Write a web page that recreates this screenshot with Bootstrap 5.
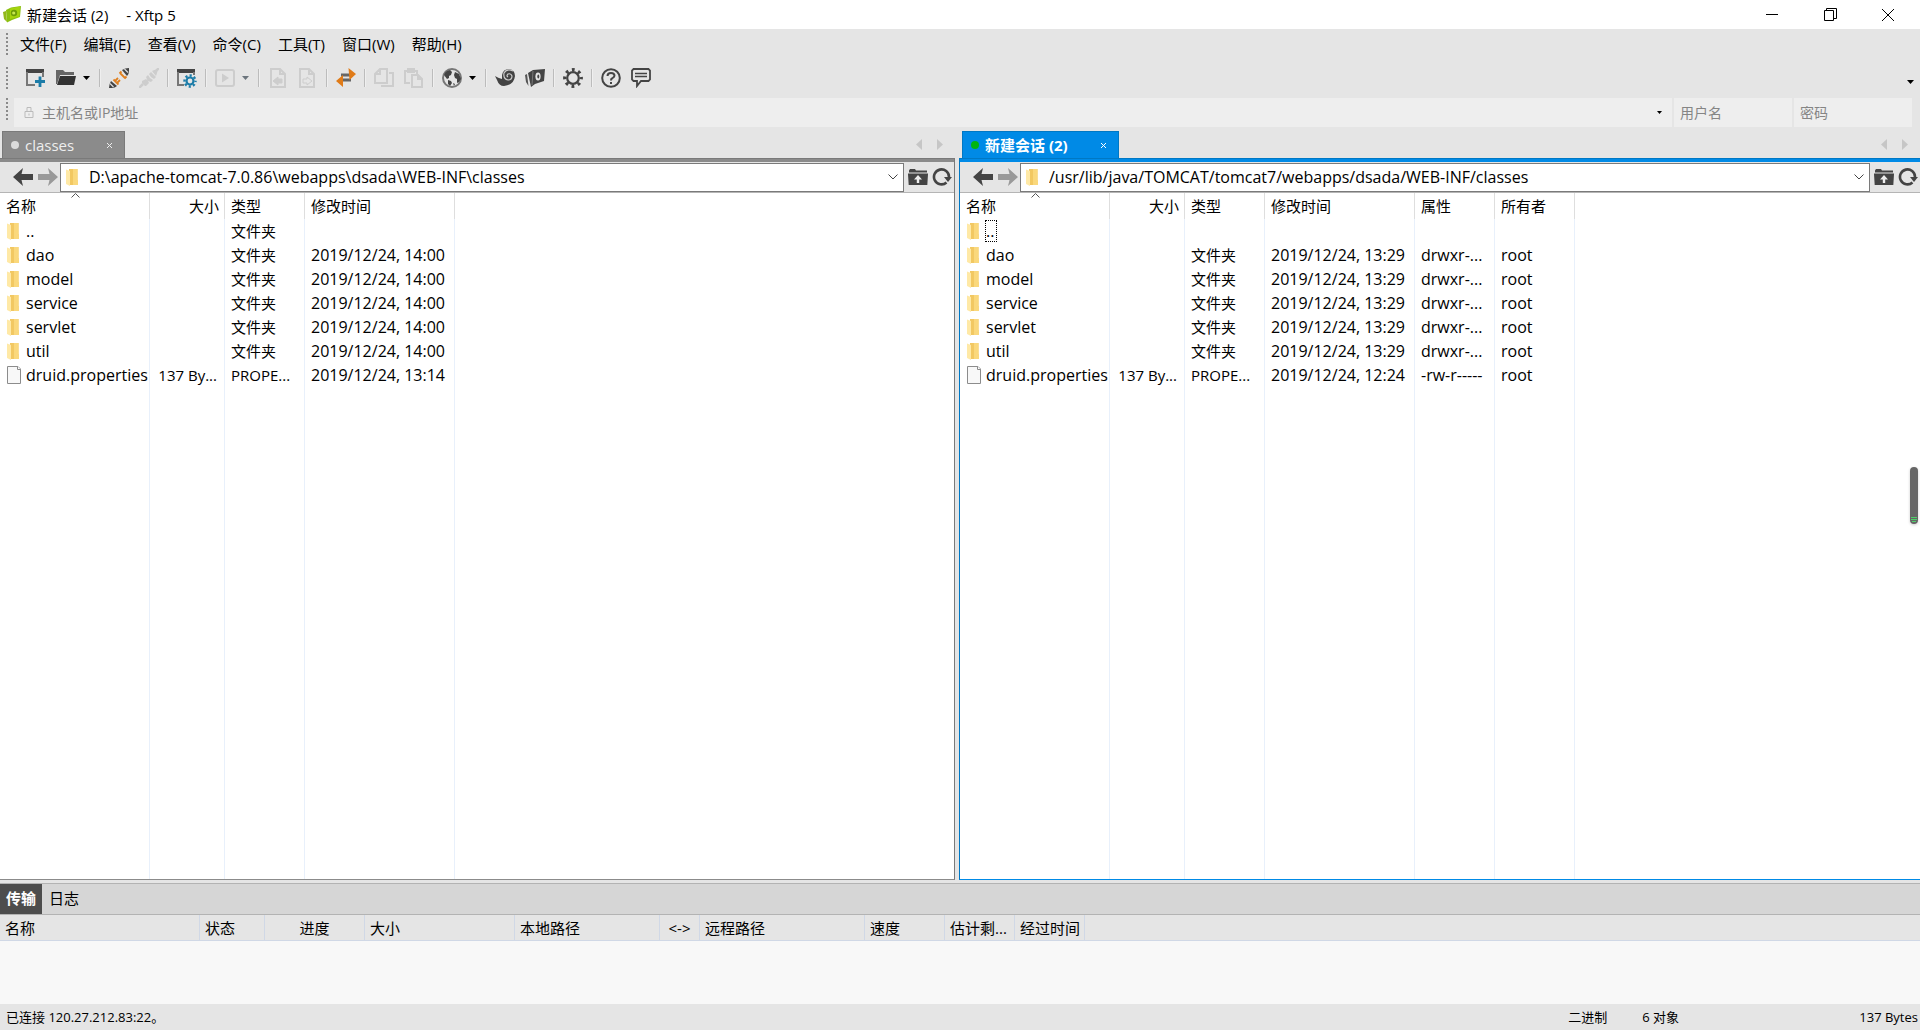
<!DOCTYPE html>
<html lang="zh-CN">
<head>
<meta charset="utf-8">
<meta name="viewport" content="width=device-width, initial-scale=1">
<title>新建会话 (2) - Xftp 5</title>
<link href="https://cdn.jsdelivr.net/npm/bootstrap@5.3.0/dist/css/bootstrap.min.css" rel="stylesheet">
<style>
:root{--chrome:#e5e5e5;--ink:#444;--edge:#7a7a7a;--blue:#008ae6;--blue-dark:#0078c4}
body{font-family:"Open Sans","Noto Sans CJK SC",sans-serif;font-size:15px;line-height:20px;color:#000;background:var(--chrome)}
button,input{font:inherit;color:inherit}
button{background:none;border:0;padding:0;display:flex;align-items:center;justify-content:center}
svg{display:block;flex:none}
.titlebar{height:29px;background:#fff;padding:0 3px}
.titlebar button{width:58px;height:29px}
.caption{padding-left:6px;gap:18px}
.grip{width:2px;height:23px;margin:0 6px;background:repeating-linear-gradient(#8a8a8a 0 2px,transparent 2px 4px)}
.menubar{height:32px;padding-bottom:2px}
.menubar a{color:#000;text-decoration:none;padding:0 8px}
.menus{gap:1px;margin-left:-2px}
.toolbar{height:34px}
.toolbar .grip{margin-right:13px}
.tool{width:30px;height:26px}
.caret{width:15px;height:26px;justify-content:flex-start;padding-left:2px}
.vsep{width:2px;height:18px;margin:0 3px;border-left:1px solid #bcbcbc;border-right:1px solid #efefef}
.off{color:#cdcdcd}
.hostbar{height:32px;padding-top:3px;padding-right:8px}
.fields{gap:2px}
.field{background:#eee;height:29px;padding:0 6px}
.host{padding:0 2px 0 10px}
.field input,.pathbox input{background:none;border:0;outline:0;min-width:0;padding:0}
.field input{font-size:14px}
.field input::placeholder{color:#858585;opacity:1}
.narrow{width:118px}
.panes{min-height:0}
.left-pane{flex:955 1 0;min-width:0;--line:#8b8b8b;--line-dark:var(--edge)}
.right-pane{flex:961 1 0;min-width:0;--line:var(--blue);--line-dark:var(--blue-dark)}
.tabrow{height:31px;padding-left:2px}
.right-pane .tabrow{padding-left:3px}
.doctab{height:27px;padding:0 8px;background:var(--line);border:1px solid var(--line-dark);border-bottom:0;color:#fff}
.doctab .dot{width:8px;height:8px;border-radius:50%;background:#dcdcdc;margin-right:6px}
.right-pane .dot{background:#00b512}
.left-pane .doctab{width:123px;color:#eee}
.right-pane .doctab{width:157px;font-weight:700}
.scrollers{gap:15px;padding-right:12px;padding-bottom:8px;color:#c6c6c6}
.pane-body{border-top:1px solid var(--line-dark);border-bottom:1px solid var(--line);min-height:0}
.left-pane .pane-body{border-right:1px solid var(--line-dark)}
.right-pane .pane-body{border-left:1px solid var(--line-dark)}
.pathbar{height:34px;border-top:3px solid var(--line);border-bottom:1px solid #b5b5b5;padding:0 2px 0 13px;color:var(--ink)}
.history{gap:5px}
.forward{color:#999}
.pathbox{height:29px;background:#fff;border:1px solid var(--edge);margin:0 4px 0 2px;padding:0 5px;color:#000;font-size:16px}
.files{table-layout:fixed;border-collapse:separate;border-spacing:0;background:#fff}
.files th,.files td{padding:0 0 0 6px;font-weight:400;white-space:nowrap;overflow:hidden;height:24px;border-right:1px solid #e8f0fb}
.files th{height:26px;border-color:#dedede;position:relative}
.files th:last-child,.files td:last-child{border-right:0}
.files .num{text-align:right;padding-right:5px}
.files td.num{padding-right:7px}
.files .lat{font-size:16px}
.files .fname{font-size:16px;padding-left:7px}
.files .fill td{height:auto}
.sorter{position:absolute;left:50%;top:0;margin-left:-4px}
.picked{outline:1px dotted #000;padding-right:2px}
.dock-tabs{margin-top:3px;height:32px;background:#d6d6d6;border-top:1px solid #b3b3b3;border-bottom:1px solid #b3b3b3}
.dock-tabs button{padding:0 7px 2px}
.dock-tabs .on{background:#4d4d4d;color:#fff;font-weight:700;padding:0 6px 2px}
.queue{table-layout:fixed;border-collapse:separate;border-spacing:0}
.queue th{height:26px;font-weight:400;padding:0 0 0 5px;white-space:nowrap;overflow:hidden;border-right:1px solid #d0d8e6;border-bottom:1px solid #d0d8e6}
.queue th:last-child{border-right:0}
.queue .mid{text-align:center;padding:0}
.queue-body{height:63px;background:#f8f8f8}
.statusbar{height:26px;font-size:13px;padding:0 2px 0 6px}
.statusbar .kind{width:74px}
.statusbar .count{width:217px}
.floater{position:absolute;right:2px;top:467px;width:8px;height:57px;border-radius:4px;background:#666;box-shadow:0 1px 3px #0003}
</style>
</head>
<body class="vh-100 d-flex flex-column overflow-hidden position-relative">
<svg width="0" height="0" class="position-absolute" aria-hidden="true">
  <symbol id="tri" viewBox="0 0 7 4"><path d="M0 0h7L3.500 4z" fill="currentColor"/></symbol>
  <symbol id="arrow" viewBox="0 0 20 18"><path d="M0 9 10 0 8.500 6H20v6H8.500L10 18z" fill="currentColor"/></symbol>
  <symbol id="folder" viewBox="0 0 15 17"><path d="M3 0h8.500v11.500H12V16H3z" fill="#f2c862"/><path d="M7 0h4.500v11.500H12V16H7z" fill="#fad87c"/><path d="M0 .5 4 2v15L0 15z" fill="#ffe9a6"/></symbol>
  <symbol id="file" viewBox="0 0 15 18"><path d="M.5.5H11L13.500 3v14.500H.5z" fill="#f8f8f8" stroke="#8c8c8c"/><path d="M10.500.5v3h3" fill="#fff" stroke="#8c8c8c"/></symbol>
  <symbol id="up" viewBox="0 0 20 16"><path d="M1 1.500 2 0h5l1 1.500h11v2H1z" fill="currentColor"/><path d="M0 4.500h20L19.300 16H.7z" fill="currentColor"/><path d="M10 6 6 10.500h2.800V14h2.400v-3.500H14z" fill="#eee"/></symbol>
  <symbol id="reload" viewBox="0 0 20 18"><path d="M14.500 14.500A7.500 7.500 0 1 1 17 9" fill="none" stroke="currentColor" stroke-width="2.600"/><path d="M12 9h8l-4 5z" fill="currentColor"/></symbol>
  <symbol id="left" viewBox="0 0 6 11"><path d="M6 0v11L0 5.500z" fill="currentColor"/></symbol>
  <symbol id="right" viewBox="0 0 6 11"><path d="M0 0v11l6-5.500z" fill="currentColor"/></symbol>
  <symbol id="down" viewBox="0 0 10 6"><path d="m.5.5 4.500 4.500L9.500.5" fill="none" stroke="#444"/></symbol>
  <symbol id="sort" viewBox="0 0 9 5"><path d="M.5 4.500 4.500.5l4 4" fill="none" stroke="#555"/></symbol>
  <symbol id="cross" viewBox="0 0 5 5"><path d="m0 0 5 5M5 0 0 5" stroke="currentColor"/></symbol>
</svg>

<header class="titlebar d-flex align-items-center">
  <svg width="18" height="17" viewBox="0 0 18 17"><path d="m0 6 3-1 1 11-3-3z" fill="#93b81c"/><path d="M3 4 8 1.500 18 0l-1 11-8 3-5 2.500z" fill="#8cc010"/><path d="m7 2.500 10-2-.8 10L7 13z" fill="#a5d40e"/><circle cx="11" cy="7" r="3.200" fill="#6d9c08"/><circle cx="10.700" cy="7" r="1.600" fill="#c6e750"/></svg>
  <div class="caption d-flex"><span>新建会话 (2)</span><span>- Xftp 5</span></div>
  <div class="d-flex ms-auto">
    <button aria-label="最小化"><svg width="12" height="12"><path d="M0 5.500h12" stroke="#000"/></svg></button>
    <button aria-label="还原"><svg width="13" height="13" fill="none" stroke="#000"><path d="M.5 2.500h9v10h-9zM2.500 2.500v-2h10v10h-3"/></svg></button>
    <button aria-label="关闭"><svg width="12" height="12"><path d="m0 0 12 12M12 0 0 12" stroke="#000"/></svg></button>
  </div>
</header>

<nav class="menubar d-flex align-items-center">
  <span class="grip"></span>
  <div class="menus d-flex">
  <a href="#">文件(F)</a><a href="#">编辑(E)</a><a href="#">查看(V)</a><a href="#">命令(C)</a><a href="#">工具(T)</a><a href="#">窗口(W)</a><a href="#">帮助(H)</a>
  </div>
</nav>

<div class="toolbar d-flex align-items-center" role="toolbar">
  <span class="grip"></span>
  <button class="tool" aria-label="新建"><svg width="20" height="20"><path d="M0 1h18v4H0z" fill="#444"/><path d="M1 4v13h8M17 4v5" fill="none" stroke="#777" stroke-width="2"/><path d="M14 8.500V19M9 13.500h10" stroke="#1c7ca8" stroke-width="2.800"/></svg></button>
  <button class="tool" aria-label="打开"><svg width="20" height="20"><path d="M0 2h7l2 2h9v3H4L1 16H0z" fill="#666"/><path d="M4 8h16l-2 9H1z" fill="#333"/></svg></button>
  <button class="caret" aria-label="打开列表"><svg width="7" height="4"><use href="#tri"/></svg></button>
  <span class="vsep"></span>
  <button class="tool" aria-label="重新连接"><svg width="20" height="20"><path d="M13 2q3-2 7-2v3q0 3-2 5z" fill="#444"/><path d="M2 13q-2 3-2 7h3q3 0 5-2z" fill="#444"/><path d="m15.500 1 3.500 3.500M1 15.500 4.500 19" stroke="#ddd" stroke-width="1.200"/><path d="m4.500 11.500 5 5M6 13l3-3M8 15l3-3M11 5l5 5M10.500 5.500l2-2M15.500 10.500l2-2" fill="none" stroke="#e08020" stroke-width="1.800"/></svg></button>
  <button class="tool off" aria-label="断开"><svg width="20" height="20"><path d="m0 20 4-4M20 0l-5 5" stroke="currentColor" stroke-width="2.500"/><path d="m3 13 4-2 1.500 1.500L7 9l2-2 2 3 1-1-2-3 2-2 5 5-2 2-3-2-1 1 3 2-2 2-3-1 1 2-3 3H6l-3-3z" fill="currentColor"/><path d="M13 3q4-2 5-1t-1 6z" fill="currentColor"/></svg></button>
  <span class="vsep"></span>
  <button class="tool" aria-label="属性"><svg width="20" height="20"><path d="M0 1h18v4H0z" fill="#444"/><path d="M1 4v13h6M17 4v3" fill="none" stroke="#777" stroke-width="2"/><circle cx="13" cy="13" r="3.500" fill="none" stroke="#1c7ca8" stroke-width="2.200"/><circle cx="13" cy="13" r="5.500" fill="none" stroke="#1c7ca8" stroke-width="2.400" stroke-dasharray="2.160 2.160" stroke-dashoffset="1.080"/></svg></button>
  <span class="vsep"></span>
  <button class="tool off" aria-label="运行"><svg width="20" height="20"><rect x="1" y="2" width="18" height="16" rx="2" fill="none" stroke="currentColor" stroke-width="2"/><path d="m7 5.500 7 4.500-7 4.500z" fill="currentColor"/></svg></button>
  <button class="caret text-secondary" aria-label="运行列表"><svg width="7" height="4"><use href="#tri"/></svg></button>
  <span class="vsep"></span>
  <button class="tool off" aria-label="向左传输"><svg width="20" height="20" fill="none" stroke="currentColor" stroke-width="2"><path d="M3 1h9l5 5v13H3zM12 1v5h5"/><path d="M14 11v4h-4v2l-5-4 5-4v2z" stroke-width="1" fill="currentColor"/></svg></button>
  <button class="tool off" aria-label="向右传输"><svg width="20" height="20" fill="none" stroke="currentColor" stroke-width="2"><path d="M2 1h9l5 5v13H2zM11 1v5h5"/><path d="M5 11v4h4v2l5-4-5-4v2z" stroke-width="1"/></svg></button>
  <span class="vsep"></span>
  <button class="tool" aria-label="同步"><svg width="20" height="20"><path d="M5 7h9M6 12h9" stroke="#666" stroke-width="3"/><path d="m12.500 0 7.500 6-6.500 6zM7 7l-7 6 7 6z" fill="#e07b18"/></svg></button>
  <span class="vsep"></span>
  <button class="tool off" aria-label="复制"><svg width="20" height="20" fill="none" stroke="currentColor" stroke-width="2"><path d="M6 1h7v14H1V6zM6 1v5H1M15 5h4v13H7"/></svg></button>
  <button class="tool off" aria-label="粘贴"><svg width="20" height="20" fill="none" stroke="currentColor" stroke-width="2"><path d="M6 15H1V3h12v3M4 1h6v3H4z"/><path d="M8 7h6l4 4v8H8zM14 7v4h4"/></svg></button>
  <span class="vsep"></span>
  <button class="tool" aria-label="语言"><svg width="20" height="20"><circle cx="10" cy="10" r="9" fill="#e5e5e5" stroke="#777" stroke-width="2"/><path d="M2 7q1-4 6-5l2 2-1 3-2 1v2l-2 1zM6 12l3 1 1 2-2 3-2-2zM12 7l1-3 4 2 2 5-2 3-2 1v-4l-2-1zM11 15l2 1-1 2z" fill="#444"/></svg></button>
  <button class="caret" aria-label="语言列表"><svg width="7" height="4"><use href="#tri"/></svg></button>
  <span class="vsep"></span>
  <button class="tool" aria-label="Xshell"><svg width="20" height="20"><path d="M0 8q3 2 7 3V7q1-6 7-6 6 1 6 7-1 9-11 10-5 0-7-6z" fill="#444"/><path d="M18 3q-6-3-9 2-1 6 4 7 4 0 4-4-1-3-4-2-2 2 0 3" fill="none" stroke="#ccc" stroke-width="1.200"/></svg></button>
  <button class="tool" aria-label="Xftp"><svg width="20" height="20"><path d="m0 7 2-1 1.500 12L1 14z" fill="#555"/><path d="M3 5 8 2l12-1-1 12-9 3-4 3z" fill="#444"/><path d="M8 3 7 17" stroke="#777"/><ellipse cx="13" cy="8.500" rx="2.600" ry="4" fill="#e5e5e5"/><ellipse cx="13.300" cy="8.500" rx="1" ry="2" fill="#444"/></svg></button>
  <span class="vsep"></span>
  <button class="tool" aria-label="选项"><svg width="20" height="20" fill="none" stroke="#444"><circle cx="10" cy="10" r="5.800" stroke-width="2.200"/><circle cx="10" cy="10" r="8.300" stroke-width="3.200" stroke-dasharray="2.800 3.720" stroke-dashoffset="1.400"/></svg></button>
  <span class="vsep"></span>
  <button class="tool" aria-label="帮助"><svg width="20" height="20" fill="none" stroke="#444" stroke-width="2"><circle cx="10" cy="10" r="8.800"/><path d="M6.500 8q0-3 3.500-3t3.500 2.800Q13.500 9 11 10.500q-1 .5-1 2M10 14v2"/></svg></button>
  <button class="tool" aria-label="反馈"><svg width="20" height="20" fill="none" stroke="#444" stroke-width="1.800"><path d="M2.500 1h15l1.500 1.500v9L17.500 13H10l-4 5v-5H2.500L1 11.500v-9z"/><path d="M4 5.500h12M4 8.500h12" stroke-width="1.400"/></svg></button>
  <button class="caret ms-auto align-self-end" aria-label="更多"><svg width="7" height="4"><use href="#tri"/></svg></button>
</div>

<form class="hostbar d-flex">
  <span class="grip"></span>
  <div class="fields d-flex flex-grow-1">
    <div class="field host flex-grow-1 d-flex align-items-center">
      <svg width="10" height="11" fill="none" stroke="#bbb"><path d="M1 4.500h8v6H1zM3 4V.5h4V4M5 6.500v2"/></svg>
      <input class="flex-grow-1 ms-2" type="text" placeholder="主机名或IP地址" aria-label="主机名或IP地址">
      <button type="button" class="caret" aria-label="历史主机"><svg width="5" height="3"><use href="#tri"/></svg></button>
    </div>
    <div class="field narrow d-flex"><input class="w-100" type="text" placeholder="用户名" aria-label="用户名"></div>
    <div class="field narrow d-flex"><input class="w-100" type="password" placeholder="密码" aria-label="密码"></div>
  </div>
</form>

<main class="panes d-flex flex-grow-1 gap-1">
  <section class="left-pane d-flex flex-column">
    <div class="tabrow d-flex align-items-end">
      <div class="doctab d-flex align-items-center"><span class="dot"></span><button>classes</button><button class="ms-auto me-1" aria-label="关闭标签"><svg width="5" height="5"><use href="#cross"/></svg></button></div>
      <div class="scrollers d-flex ms-auto"><button aria-label="上一个"><svg width="6" height="11"><use href="#left"/></svg></button><button aria-label="下一个"><svg width="6" height="11"><use href="#right"/></svg></button></div>
    </div>
    <div class="pane-body flex-grow-1 d-flex flex-column">
      <div class="pathbar d-flex align-items-center">
        <div class="history d-flex">
          <button aria-label="后退"><svg width="20" height="18"><use href="#arrow"/></svg></button>
          <button class="forward" aria-label="前进"><svg width="20" height="18"><use href="#arrow" transform="translate(20 0) scale(-1 1)"/></svg></button>
        </div>
        <div class="pathbox flex-grow-1 d-flex align-items-center"><svg width="15" height="17"><use href="#folder"/></svg><input class="flex-grow-1 ms-2" type="text" aria-label="本地路径" value="D:\apache-tomcat-7.0.86\webapps\dsada\WEB-INF\classes"><button aria-label="路径列表"><svg width="10" height="6"><use href="#down"/></svg></button></div>
        <button aria-label="上级目录"><svg width="20" height="16"><use href="#up"/></svg></button>
        <button class="ms-1" aria-label="刷新"><svg width="20" height="18"><use href="#reload"/></svg></button>
      </div>
      <div class="flex-grow-1 bg-white">
      <table class="files w-100 h-100">
        <colgroup><col style="width:150px"><col style="width:75px"><col style="width:80px"><col style="width:150px"><col></colgroup>
        <thead><tr><th>名称<svg class="sorter" width="9" height="5"><use href="#sort"/></svg></th><th class="num">大小</th><th>类型</th><th>修改时间</th><th></th></tr></thead>
        <tbody id="local"></tbody>
      </table>
      </div>
    </div>
  </section>

  <section class="right-pane d-flex flex-column">
    <div class="tabrow d-flex align-items-end">
      <div class="doctab d-flex align-items-center"><span class="dot"></span><button class="fw-bold">新建会话 (2)</button><button class="ms-auto me-1" aria-label="关闭标签"><svg width="5" height="5"><use href="#cross"/></svg></button></div>
      <div class="scrollers d-flex ms-auto"><button aria-label="上一个"><svg width="6" height="11"><use href="#left"/></svg></button><button aria-label="下一个"><svg width="6" height="11"><use href="#right"/></svg></button></div>
    </div>
    <div class="pane-body flex-grow-1 d-flex flex-column">
      <div class="pathbar d-flex align-items-center">
        <div class="history d-flex">
          <button aria-label="后退"><svg width="20" height="18"><use href="#arrow"/></svg></button>
          <button class="forward" aria-label="前进"><svg width="20" height="18"><use href="#arrow" transform="translate(20 0) scale(-1 1)"/></svg></button>
        </div>
        <div class="pathbox flex-grow-1 d-flex align-items-center"><svg width="15" height="17"><use href="#folder"/></svg><input class="flex-grow-1 ms-2" type="text" aria-label="远程路径" value="/usr/lib/java/TOMCAT/tomcat7/webapps/dsada/WEB-INF/classes"><button aria-label="路径列表"><svg width="10" height="6"><use href="#down"/></svg></button></div>
        <button aria-label="上级目录"><svg width="20" height="16"><use href="#up"/></svg></button>
        <button class="ms-1" aria-label="刷新"><svg width="20" height="18"><use href="#reload"/></svg></button>
      </div>
      <div class="flex-grow-1 bg-white">
      <table class="files w-100 h-100">
        <colgroup><col style="width:150px"><col style="width:75px"><col style="width:80px"><col style="width:150px"><col style="width:80px"><col style="width:80px"><col></colgroup>
        <thead><tr><th>名称<svg class="sorter" width="9" height="5"><use href="#sort"/></svg></th><th class="num">大小</th><th>类型</th><th>修改时间</th><th>属性</th><th>所有者</th><th></th></tr></thead>
        <tbody id="remote"></tbody>
      </table>
      </div>
    </div>
  </section>
</main>

<div class="dock-tabs d-flex"><button class="on">传输</button><button>日志</button></div>
<table class="queue w-100">
  <colgroup><col style="width:200px"><col style="width:65px"><col style="width:100px"><col style="width:150px"><col style="width:145px"><col style="width:40px"><col style="width:165px"><col style="width:80px"><col style="width:70px"><col style="width:70px"><col></colgroup>
  <thead><tr><th>名称</th><th>状态</th><th class="mid">进度</th><th>大小</th><th>本地路径</th><th class="mid">&lt;-&gt;</th><th>远程路径</th><th>速度</th><th>估计剩...</th><th>经过时间</th><th></th></tr></thead>
</table>
<div class="queue-body"></div>
<footer class="statusbar d-flex align-items-center"><span class="me-auto">已连接 120.27.212.83:22。</span><span class="kind">二进制</span><span class="count">6 对象</span><span>137 Bytes</span></footer>

<div class="floater"><svg width="8" height="57"><path d="M1 50.500h6M1 52.500h6M2 54.500h4" stroke="#4fd06a"/></svg></div>

<script>
const dirs = ['dao', 'model', 'service', 'servlet', 'util'];
const icon = (id, h) => `<svg width="15" height="${h}"><use href="#${id}"/></svg>`;
function row(name, size, type, date, extra, isFile) {
  const label = name === '..' && extra.length ? '<span class="picked">..</span>' : name;
  return `<tr><td class="fname"><span class="d-flex align-items-center gap-1">${icon(isFile ? 'file' : 'folder', isFile ? 18 : 17)}${label}</span></td>` +
    `<td class="num">${size}</td><td>${type}</td><td class="lat">${date}</td>` +
    extra.map(e => `<td class="lat">${e}</td>`).join('') + '<td></td></tr>';
}
function fill(id, parentType, dirDate, fileDate, dirExtra, fileExtra) {
  document.getElementById(id).innerHTML =
    row('..', '', parentType, '', dirExtra.map(() => '')) +
    dirs.map(d => row(d, '', '文件夹', dirDate, dirExtra)).join('') +
    row('druid.properties', '137 By...', 'PROPE...', fileDate, fileExtra, true) +
    '<tr class="fill">' + '<td></td>'.repeat(5 + dirExtra.length) + '</tr>';
}
fill('local', '文件夹', '2019/12/24, 14:00', '2019/12/24, 13:14', [], []);
fill('remote', '', '2019/12/24, 13:29', '2019/12/24, 12:24', ['drwxr-...', 'root'], ['-rw-r-----', 'root']);
</script>
<script src="https://cdn.jsdelivr.net/npm/bootstrap@5.3.0/dist/js/bootstrap.bundle.min.js"></script>
</body>
</html>
